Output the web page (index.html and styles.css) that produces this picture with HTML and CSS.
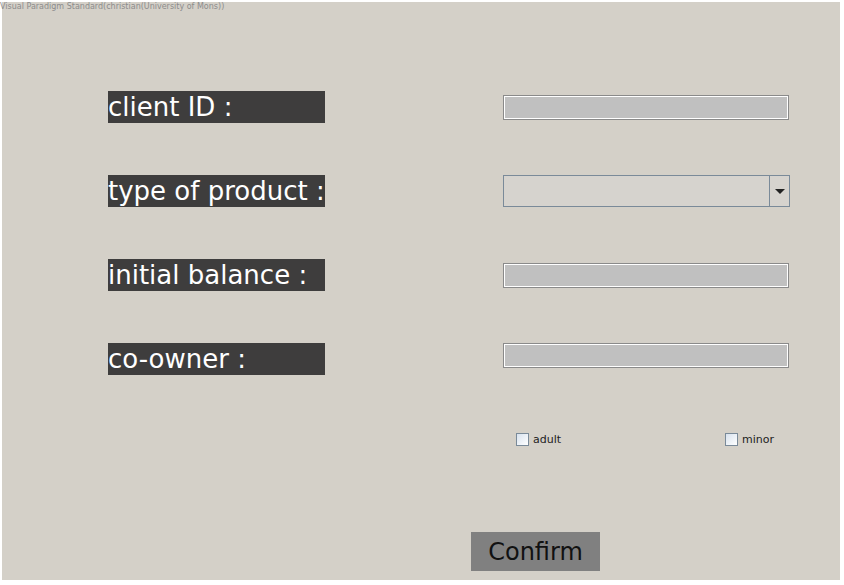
FILE: index.html
```html
<!DOCTYPE html>
<html>
<head>
<meta charset="utf-8">
<link rel="stylesheet" href="styles.css">
</head>
<body>
<div class="title">Visual Paradigm Standard(christian(University of Mons))</div>
<div class="panel">
  <div class="form">
    <div class="label">client ID :</div>
    <div class="field"></div>
    <div class="label">type of product :</div>
    <div class="combo"><div class="combo-text"></div><div class="combo-btn"><span class="arrow"></span></div></div>
    <div class="label">initial balance :</div>
    <div class="field"></div>
    <div class="label">co-owner :</div>
    <div class="field top"></div>
  </div>
  <div class="checks">
    <label class="check"><span class="box"></span><span>adult</span></label>
    <label class="check"><span class="box"></span><span>minor</span></label>
  </div>
  <div class="actions">
    <div class="button">Confirm</div>
  </div>
</div>
</body>
</html>
```
FILE: styles.css
```css
html, body {
  margin: 0;
  padding: 0;
  background: #ffffff;
  font-family: "DejaVu Sans", sans-serif;
}
body {
  width: 844px;
  height: 585px;
  position: relative;
  overflow: hidden;
}
.title {
  position: absolute;
  left: 0;
  top: 2px;
  font-size: 8px;
  line-height: 10px;
  color: #8c8c8c;
  white-space: nowrap;
}
.panel {
  margin: 2px 0 0 2px;
  width: 838px;
  height: 578px;
  background: #d4d0c8;
  box-sizing: border-box;
  padding: 89px 0 0 106px;
  display: flex;
  flex-direction: column;
}
.form {
  display: grid;
  grid-template-columns: 217px 287px;
  grid-auto-rows: 32px;
  column-gap: 178px;
  row-gap: 52px;
  align-items: center;
}
.label {
  background: #3e3d3d;
  color: #ffffff;
  font-size: 26px;
  line-height: 32px;
  height: 32px;
  white-space: nowrap;
  overflow: hidden;
}
.field {
  width: 286px;
  height: 25px;
  box-sizing: border-box;
  background: #c0c0c0;
  border: 1px solid #8a8a8a;
  box-shadow: inset 0 0 0 1px #ffffff;
}
.field.top {
  align-self: start;
}
.combo {
  width: 287px;
  height: 32px;
  box-sizing: border-box;
  border: 1px solid #7a8a99;
  display: flex;
  background: #d6d3ce;
}
.combo-text {
  flex: 1;
}
.combo-btn {
  width: 19px;
  border-left: 1px solid #7a8a99;
  display: flex;
  align-items: center;
  justify-content: center;
}
.arrow {
  width: 0;
  height: 0;
  border-left: 5px solid transparent;
  border-right: 5px solid transparent;
  border-top: 5px solid #222222;
}
.checks {
  margin-top: 58px;
  margin-left: 408px;
  width: 258px;
  display: flex;
  justify-content: space-between;
  height: 13px;
}
.check {
  display: flex;
  align-items: center;
  gap: 4px;
  font-size: 11px;
  color: #222222;
  line-height: 13px;
}
.box {
  width: 13px;
  height: 13px;
  box-sizing: border-box;
  border: 1px solid #7a8a99;
  background: linear-gradient(135deg, #d8e2ee, #ffffff);
}
.actions {
  margin-top: 86px;
  margin-left: 363px;
}
.button {
  width: 129px;
  height: 39px;
  background: #808080;
  color: #111111;
  font-size: 24px;
  display: flex;
  align-items: center;
  justify-content: center;
}
```
